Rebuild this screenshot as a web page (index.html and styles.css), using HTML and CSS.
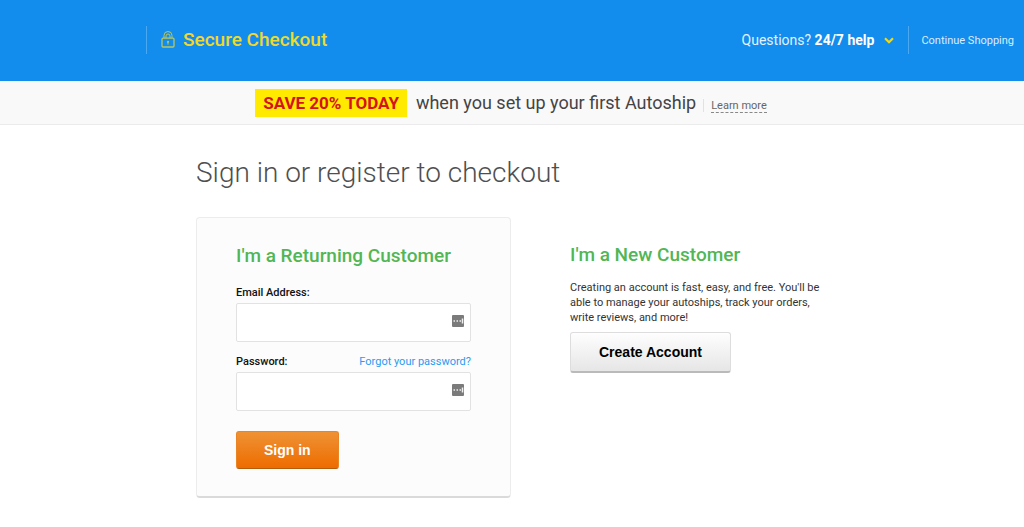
FILE: index.html
```
<!DOCTYPE html>
<html lang="en">
<head>
<meta charset="utf-8">
<title>Secure Checkout</title>
<link rel="stylesheet" href="styles.css">
</head>
<body>
<header class="topbar">
  <div class="brand">
    <svg class="lock" viewBox="0 0 14 18" width="14" height="18" fill="none" stroke="currentColor" aria-hidden="true">
      <rect x="1" y="7.200" width="12" height="8.800" rx="1" stroke-width="1.3"/>
      <path d="M3 7V4.500a4 4 0 0 1 8 0V7M5 7V5a2 2 0 0 1 4 0v2" stroke-width="1"/>
      <circle cx="7" cy="10.800" r="1.100" fill="currentColor" stroke="none"/>
      <path d="M7 10.800v2.800" stroke-width="1"/>
    </svg>
    <span>Secure Checkout</span>
  </div>
  <nav class="links">
    <a class="help" href="#help"><span>Questions? <strong>24/7 help</strong></span>
      <svg class="chevron" viewBox="0 0 10 7" width="10" height="7" fill="none" stroke="currentColor" stroke-width="2.200" aria-hidden="true"><path d="M1 1.200l4 4 4-4"/></svg>
    </a>
    <a class="continue" href="#shop">Continue Shopping</a>
  </nav>
</header>
<section class="promo">
  <strong class="save">SAVE 20% TODAY</strong>
  <span class="offer">when you set up your first Autoship</span>
  <span class="more"><a href="#autoship">Learn more</a></span>
</section>
<main class="page">
  <h1>Sign in or register to checkout</h1>
  <div class="columns">
    <form class="card">
      <h2>I'm a Returning Customer</h2>
      <div class="row"><label for="email">Email Address:</label></div>
      <div class="field">
        <input id="email" type="email">
        <svg class="key" viewBox="0 0 12 12" width="12" height="12" aria-hidden="true"><rect width="12" height="12" rx="1" fill="#7b7b7b"/><path d="M1.500 6h1.500M4.500 6H6M7.500 6H9M10.500 3.500v5" stroke="#f0f0f0" stroke-width="1.500"/></svg>
      </div>
      <div class="row"><label for="password">Password:</label><a href="#forgot">Forgot your password?</a></div>
      <div class="field">
        <input id="password" type="password">
        <svg class="key" viewBox="0 0 12 12" width="12" height="12" aria-hidden="true"><rect width="12" height="12" rx="1" fill="#7b7b7b"/><path d="M1.500 6h1.500M4.500 6H6M7.500 6H9M10.500 3.500v5" stroke="#f0f0f0" stroke-width="1.500"/></svg>
      </div>
      <button class="btn primary" type="submit">Sign in</button>
    </form>
    <section class="new">
      <h2>I'm a New Customer</h2>
      <p>Creating an account is fast, easy, and free. You'll be able to manage your autoships, track your orders, write reviews, and more!</p>
      <button class="btn plain" type="button">Create Account</button>
    </section>
  </div>
</main>
</body>
</html>
```
FILE: styles.css
```
* { box-sizing: border-box; }
body {
  margin: 0;
  background: #fff;
  color: #333;
  font: 11px/15px Roboto, "Liberation Sans", sans-serif;
}
h1, h2, p { margin: 0; }
a { text-decoration: none; }
.topbar {
  display: flex;
  align-items: center;
  justify-content: space-between;
  padding: 26px 10px 27px 146px;
  background: #128ced;
}
.brand {
  display: flex;
  align-items: center;
  gap: 8px;
  height: 28px;
  padding-left: 14px;
  border-left: 1px solid #4ba9f2;
  color: #efd92c;
  font-size: 19px;
  font-weight: 500;
  line-height: 24px;
}
.lock { color: #b9c65e; }
.links { display: flex; align-items: center; }
.help {
  display: flex;
  align-items: center;
  gap: 10px;
  margin-right: 14px;
  color: #e3f2fd;
  font-size: 14px;
}
.help strong { color: #fff; font-weight: 700; }
.chevron { color: #f5d90f; }
.continue {
  padding: 7px 0 6px 12px;
  border-left: 1px solid #4ba9f2;
  color: #d8edfd;
}
.promo {
  display: flex;
  align-items: center;
  justify-content: center;
  padding: 8px 2px 7px 0;
  border-bottom: 1px solid #ebebeb;
  background: #f9f9f9;
  color: #444;
}
.save {
  padding: 0 8px;
  background: #ffea00;
  color: #d5121e;
  font-size: 17px;
  font-weight: 700;
  line-height: 28px;
}
.offer { margin: 0 7px 0 9px; font-size: 18px; line-height: 28px; }
.more { margin-top: 4px; padding-left: 7px; border-left: 1px solid #e2e2e2; line-height: 13px; }
.more a { color: #666; border-bottom: 1px dashed #888; }
.page { max-width: 828px; margin-right: auto; padding: 29px 0 30px 196px; }
h1 {
  color: #4f4f4f;
  font-size: 28px;
  font-weight: 300;
  line-height: 38px;
}
.columns { display: flex; align-items: flex-start; gap: 59px; margin-top: 25px; }
.card {
  flex: 0 0 315px;
  padding: 26px 39px 27px;
  border: 1px solid #ececec;
  border-bottom: 2px solid #dadada;
  border-radius: 4px;
  background: #fcfcfc;
}
h2 {
  color: #51b655;
  font-size: 19px;
  font-weight: 500;
  line-height: 24px;
}
.row { display: flex; justify-content: space-between; margin: 12px 0 3px; }
h2 + .row { margin-top: 17px; }
label { color: #111; font-weight: 500; }
.row a { color: #2b9af0; }
.field { position: relative; }
.field input {
  display: block;
  width: 100%;
  height: 39px;
  padding: 0 28px 0 10px;
  border: 1px solid #e2e2e2;
  border-radius: 2px;
  background: #fff;
  font: inherit;
}
.key { position: absolute; top: 12px; right: 7px; }
.btn {
  display: block;
  padding: 0 27px;
  border-radius: 3px;
  font: 700 14px/36px "Liberation Sans", Arial, sans-serif;
}
.primary {
  margin-top: 20px;
  border: 1px solid #ea8526;
  border-bottom-color: #b45b0c;
  background: linear-gradient(#ef9234, #ee6c00);
  color: #fff;
}
.plain {
  margin-top: 7px;
  padding: 0 28px;
  border: 1px solid #ddd;
  border-bottom: 2px solid #bababa;
  background: linear-gradient(#fefefe, #e6e6e6);
  color: #000;
  line-height: 38px;
}
.new { flex: 1; padding-top: 26px; }
.new p { margin-top: 13px; }
```
